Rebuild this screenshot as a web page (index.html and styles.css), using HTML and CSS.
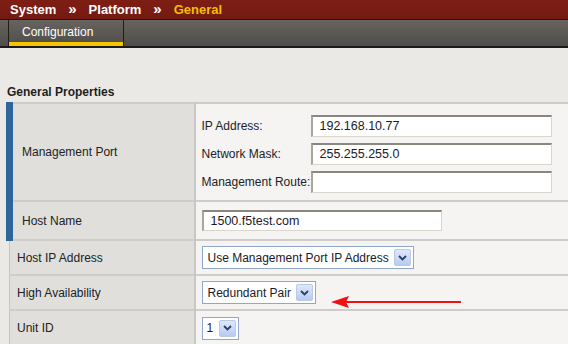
FILE: index.html
```html
<!DOCTYPE html>
<html lang="en">
<head>
    <meta charset="UTF-8">
    <title>System - Platform - General</title>
    <link rel="stylesheet" href="styles.css">
</head>
<body>
    <!-- Breadcrumb -->
    <div class="crumbs">
        <span>System</span><span class="sep">&raquo;</span><span>Platform</span><span class="sep">&raquo;</span><span class="current">General</span>
    </div>

    <!-- Tabs -->
    <div class="tabbar">
        <div class="tab active">Configuration</div>
    </div>

    <div class="content">
        <h3>General Properties</h3>
        <table class="props">
            <tr class="mgmt">
                <th class="mark">Management Port</th>
                <td>
                    <div class="subrow"><label>IP Address:</label><div class="field">192.168.10.77</div></div>
                    <div class="subrow"><label>Network Mask:</label><div class="field">255.255.255.0</div></div>
                    <div class="subrow"><label>Management Route:</label><div class="field"></div></div>
                </td>
            </tr>
            <tr class="host">
                <th class="mark">Host Name</th>
                <td><div class="field wide">1500.f5test.com</div></td>
            </tr>
            <tr class="plain">
                <th>Host IP Address</th>
                <td><div class="select">Use Management Port IP Address<span class="drop"><svg width="9" height="6" viewBox="0 0 9 6"><path d="M1 1 L4.5 4.5 L8 1" fill="none" stroke="#2b3e63" stroke-width="1.8"/></svg></span></div></td>
            </tr>
            <tr class="plain">
                <th>High Availability</th>
                <td class="ha">
                    <div class="select">Redundant Pair<span class="drop"><svg width="9" height="6" viewBox="0 0 9 6"><path d="M1 1 L4.5 4.5 L8 1" fill="none" stroke="#2b3e63" stroke-width="1.8"/></svg></span></div>
                    <svg class="arrow" width="131" height="14" viewBox="0 0 131 14"><line x1="12" y1="7" x2="130" y2="7" stroke="#ee1111" stroke-width="2"/><path d="M0 7 L18 1 L15 7 L18 13 Z" fill="#ee1111"/></svg>
                </td>
            </tr>
            <tr class="plain last">
                <th>Unit ID</th>
                <td><div class="select small">1<span class="drop"><svg width="9" height="6" viewBox="0 0 9 6"><path d="M1 1 L4.5 4.5 L8 1" fill="none" stroke="#2b3e63" stroke-width="1.8"/></svg></span></div></td>
            </tr>
        </table>
    </div>
</body>
</html>
```

FILE: styles.css
```css
/* General body styles */
body {
    margin: 0;
    padding: 0;
    font-family: "Liberation Sans", Arial, sans-serif;
    background-color: #ebe9e5;
    color: #222;
    width: 568px;
    height: 344px;
    overflow: hidden;
}

/* Breadcrumb bar */
.crumbs {
    height: 19px;
    background: linear-gradient(#7e1e15, #741a12);
    border-bottom: 1px solid #2a1410;
    padding-left: 10px;
    color: #ffffff;
    font-size: 13px;
    font-weight: bold;
    line-height: 18px;
    box-sizing: content-box;
}
.crumbs .sep {
    margin: 0 12px;
    font-size: 15px;
}
.crumbs .current {
    color: #f2bf00;
}

/* Tab bar */
.tabbar {
    height: 26px;
    background: linear-gradient(#67645f, #4f4d49);
    border-bottom: 2px solid #1c1b1a;
    display: flex;
    padding-left: 8px;
}
.tab {
    width: 116px;
    border-left: 1px solid #1f1e1d;
    border-right: 1px solid #1f1e1d;
    color: #ffffff;
    font-size: 12px;
    padding-left: 13px;
    box-sizing: border-box;
    line-height: 26px;
}
.tab.active {
    box-shadow: inset 0 -4px 0 #f4c500;
    line-height: 24px;
}

/* Content */
.content {
    padding: 37px 0 0 6px;
}
.content h3 {
    margin: 0;
    font-size: 12px;
    font-weight: bold;
    color: #1e1e1e;
    line-height: 14px;
    height: 17px;
    padding-left: 1px;
}

.props {
    border-collapse: collapse;
    width: 562px;
    font-size: 12px;
}
.props tr {
    border-top: 2px solid #cfcdc9;
}
.props th {
    width: 185px;
    text-align: left;
    font-weight: normal;
    background-color: #e0dfdc;
    border-left: 1px solid #c6c4c0;
    border-right: 2px solid #c9c7c3;
    padding: 0 0 0 7px;
    box-sizing: border-box;
    color: #222;
}
.props th.mark {
    border-left: 7px solid #2f6699;
    padding-left: 9px;
}
.props td {
    background-color: #f5f4f2;
    padding: 0 0 0 6px;
    vertical-align: middle;
}

.mgmt {
    height: 98px;
}
.mgmt td {
    padding-top: 4px;
}
.host {
    height: 39px;
}
.plain {
    height: 35px;
}

/* Management port sub rows */
.subrow {
    display: flex;
    align-items: center;
    height: 28px;
}
.subrow label {
    width: 109px;
    flex: none;
}

/* Text fields */
.field {
    width: 241px;
    height: 22px;
    box-sizing: border-box;
    background-color: #ffffff;
    border: 1px solid #d9d6cc;
    border-top: 2px solid #8a877f;
    border-left: 2px solid #a9a69e;
    padding-left: 7px;
    font-size: 12.5px;
    line-height: 19px;
    color: #1a1a2a;
}
.field.wide {
    width: 240px;
    height: 21px;
    line-height: 18px;
}

/* Selects */
.select {
    display: inline-flex;
    align-items: center;
    height: 23px;
    box-sizing: border-box;
    border: 1px solid #8fa7c9;
    background-color: #ffffff;
    padding: 0 2px 0 5px;
    font-size: 12px;
    color: #1a1a2a;
}
.select .drop {
    margin-left: 5px;
    width: 17px;
    height: 17px;
    box-sizing: border-box;
    border: 1px solid #b9c9e6;
    border-radius: 2px;
    background: linear-gradient(#dfe8fb, #b7cbf1);
    display: flex;
    align-items: center;
    justify-content: center;
}
.select.small {
    padding-left: 4px;
}
.select.small .drop {
    margin-left: 6px;
}

/* Annotation arrow */
.ha {
    position: relative;
}
.arrow {
    position: absolute;
    left: 135px;
    top: 19px;
}
```
